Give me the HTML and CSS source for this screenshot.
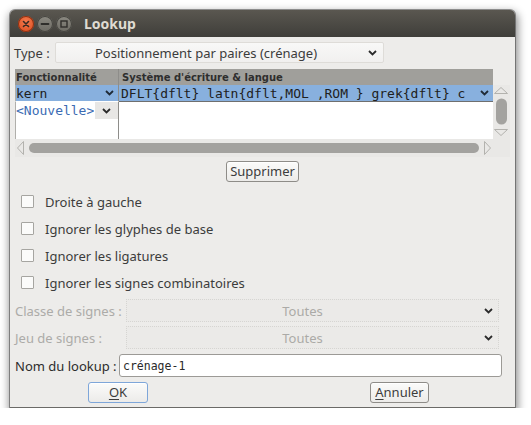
FILE: index.html
```html
<!DOCTYPE html>
<html lang="fr">
<head>
<meta charset="utf-8">
<title>Lookup</title>
<link rel="stylesheet" href="styles.css">
</head>
<body>
<div class="window">
  <div class="titlebar">
    <span class="wbtn close"><svg width="16" height="16" viewBox="0 0 16 16"><path d="M5.5 5.5 L10.5 10.5 M10.5 5.5 L5.5 10.5" stroke="#3a2a22" stroke-width="1.6" stroke-linecap="round"/></svg></span>
    <span class="wbtn"><svg width="16" height="16" viewBox="0 0 16 16"><path d="M4.5 8 H11.5" stroke="#2f2e2b" stroke-width="1.8" stroke-linecap="round"/></svg></span>
    <span class="wbtn"><svg width="16" height="16" viewBox="0 0 16 16"><rect x="5" y="5" width="6" height="6" fill="none" stroke="#2f2e2b" stroke-width="1.4"/></svg></span>
    <span class="title">Lookup</span>
  </div>
  <div class="content">
    <div class="type-row">
      <span class="label">Type :</span>
      <div class="select type-select">
        <span class="sel-text">Positionnement par paires (crénage)</span>
        <svg class="chev" width="9" height="6" viewBox="0 0 9 6"><path d="M1 1 L4.5 4.5 L8 1" fill="none" stroke="#2b2b2b" stroke-width="1.8"/></svg>
      </div>
    </div>

    <div class="table">
      <div class="th th1">Fonctionnalité</div>
      <div class="th th2">Système d'écriture &amp; langue</div>
      <div class="corner-top"></div>

      <div class="cell c1 sel">
        <span class="mono">kern</span>
        <svg class="chev" width="9" height="6" viewBox="0 0 9 6"><path d="M1 1 L4.5 4.5 L8 1" fill="none" stroke="#1f2a36" stroke-width="1.8"/></svg>
      </div>
      <div class="cell c2 sel">
        <span class="mono">DFLT{dflt} latn{dflt,MOL ,ROM } grek{dflt} c</span>
        <svg class="chev" width="9" height="6" viewBox="0 0 9 6"><path d="M1 1 L4.5 4.5 L8 1" fill="none" stroke="#1f2a36" stroke-width="1.8"/></svg>
      </div>
      <div class="vscroll">
        <svg width="16" height="54" viewBox="0 0 16 54">
          <path d="M1.5 8.5 L8 2.5 L14.5 8.5 Z" fill="none" stroke="#b3b2ae" stroke-width="1"/>
          <rect x="3" y="13.5" width="11" height="26" rx="5.5" fill="#a3a29f"/>
          <path d="M1.5 44.5 L8 50.5 L14.5 44.5 Z" fill="none" stroke="#b3b2ae" stroke-width="1"/>
        </svg>
      </div>

      <div class="cell c1 new">
        <span class="mono blue">&lt;Nouvelle&gt;</span>
        <span class="chevbox"><svg class="chev" width="9" height="6" viewBox="0 0 9 6"><path d="M1 1 L4.5 4.5 L8 1" fill="none" stroke="#2b2b2b" stroke-width="1.8"/></svg></span>
      </div>
      <div class="cell c2 empty"></div>

      <div class="hscroll">
        <svg width="495" height="18" viewBox="0 0 495 18">
          <path d="M8.5 2.5 L2.5 9 L8.5 15.5 Z" fill="none" stroke="#b3b2ae" stroke-width="1"/>
          <rect x="14" y="4" width="450" height="10" rx="5" fill="#a3a29f"/>
          <path d="M469.5 2.5 L475.5 9 L469.5 15.5 Z" fill="none" stroke="#b3b2ae" stroke-width="1"/>
        </svg>
      </div>
    </div>

    <div class="center-row">
      <button class="btn">Supprimer</button>
    </div>

    <div class="checks">
      <label class="check"><span class="box"></span><span>Droite à gauche</span></label>
      <label class="check"><span class="box"></span><span>Ignorer les glyphes de base</span></label>
      <label class="check"><span class="box"></span><span>Ignorer les ligatures</span></label>
      <label class="check"><span class="box"></span><span>Ignorer les signes combinatoires</span></label>
    </div>

    <div class="field-row first disabled">
      <span class="flabel">Classe de signes :</span>
      <div class="select dsel">
        <span class="sel-text">Toutes</span>
        <svg class="chev" width="9" height="6" viewBox="0 0 9 6"><path d="M1 1 L4.5 4.5 L8 1" fill="none" stroke="#2b2b2b" stroke-width="1.8"/></svg>
      </div>
    </div>
    <div class="field-row disabled">
      <span class="flabel">Jeu de signes :</span>
      <div class="select dsel">
        <span class="sel-text">Toutes</span>
        <svg class="chev" width="9" height="6" viewBox="0 0 9 6"><path d="M1 1 L4.5 4.5 L8 1" fill="none" stroke="#2b2b2b" stroke-width="1.8"/></svg>
      </div>
    </div>
    <div class="field-row name-row">
      <span class="flabel">Nom du lookup :</span>
      <div class="input"><span class="mono small">crénage-1</span></div>
    </div>

    <div class="button-row">
      <button class="btn ok"><u>O</u>K</button>
      <button class="btn cancel"><u>A</u>nnuler</button>
    </div>
  </div>
</div>
</body>
</html>
```

FILE: styles.css
```css
html, body {
  margin: 0;
  padding: 0;
  background: #ffffff;
}
body {
  padding: 10px 0 0 10px;
  font-family: "Noto Sans", "DejaVu Sans", sans-serif;
  font-size: 13px;
  color: #3c3c3c;
}
.window {
  width: 505px;
  height: 398px;
  max-height: 398px;
  box-sizing: border-box;
  background: #edecea;
  border-radius: 5px 5px 0 0;
  border-bottom: 1px solid #6b6a67;
  box-shadow: 0 0 0 1px rgba(60,60,60,0.5), 1px 4px 8px 2px rgba(0,0,0,0.45);
  display: flex;
  flex-direction: column;
  overflow: hidden;
}
.titlebar {
  height: 27px;
  flex: none;
  background: linear-gradient(#5a5750, #3f3e3a);
  display: flex;
  align-items: center;
  padding-left: 8px;
  gap: 3px;
}
.wbtn {
  width: 16px;
  height: 16px;
  border-radius: 50%;
  background: linear-gradient(#8b8981, #6c6a63);
  box-shadow: inset 0 0 0 1px #45443f;
  display: flex;
}
.wbtn.close {
  background: radial-gradient(circle at 50% 35%, #f47a4e, #d8481a);
  box-shadow: inset 0 0 0 1px #8a3214;
}
.title {
  margin-left: 9px;
  font-weight: bold;
  font-size: 14px;
  color: #dfdbd2;
}
.content {
  flex: 1;
  min-height: 0;
  display: flex;
  flex-direction: column;
  padding: 0 0 0 4px;
}
.type-row {
  margin-top: 5px;
  height: 21px;
  flex: none;
  display: flex;
  align-items: center;
}
.label { width: 41px; flex: none; }
.select {
  display: flex;
  align-items: center;
  box-sizing: border-box;
}
.type-select {
  width: 329px;
  height: 21px;
  background: linear-gradient(#f8f8f7, #f1f0ef);
  border: 1px solid #dedcd8;
  border-radius: 2px;
}
.sel-text {
  flex: 1;
  text-align: center;
  color: #3c3c3c;
}
.type-select .sel-text { padding-right: 12px; }
.chev { flex: none; display: block; }
.type-select .chev { margin-right: 6px; }

/* table */
.table {
  flex: none;
  margin-top: 6px;
  margin-left: 1px;
  width: 495px;
  height: 88px;
  display: grid;
  grid-template-columns: 104px 374px 17px;
  grid-template-rows: 16px 17px 37px 18px;
}
.th {
  background: #a09f9b;
  font-family: "DejaVu Sans", sans-serif;
  font-weight: bold;
  font-size: 10px;
  color: #2e2e2e;
  display: flex;
  align-items: center;
  padding-left: 1px;
  white-space: nowrap;
  overflow: hidden;
}
.th1 { border-right: 1px solid #8e8d8a; }
.th2 { padding-left: 3px; }
.corner-top { background: #edecea; }
.cell {
  display: flex;
  align-items: center;
  overflow: hidden;
  white-space: nowrap;
  background: #ffffff;
}
.c1 { border-right: 1px solid #8e8d8a; border-left: 1px solid #b0afab; }
.c2 { padding-left: 2px; }
.cell.sel { background: #88b0de; }
.c2.sel { border-bottom: 1px solid #6f6f6f; }
.c1.sel { border-bottom: 1px solid #ffffff; }
.mono {
  font-family: "DejaVu Sans Mono", monospace;
  font-size: 13px;
  color: #202020;
  flex: 1;
  overflow: hidden;
}
.mono.blue { color: #3b6bb3; flex: none; }
.mono.small { font-size: 11.5px; color: #2a2a2a; }
.cell.sel .chev { margin-right: 4px; }
.new { align-items: flex-start; }
.new .mono { line-height: 17px; }
.chevbox {
  margin-left: auto;
  width: 23px;
  height: 17px;
  background: #e8e7e5;
  display: flex;
  align-items: center;
  justify-content: center;
}
.vscroll {
  grid-column: 3;
  grid-row: 2 / span 2;
  background: #e9e8e6;
}
.vscroll svg { display: block; }
.hscroll {
  grid-column: 1 / span 3;
  grid-row: 4;
  background: #e9e8e6;
}
.hscroll svg { display: block; }

/* buttons */
.center-row {
  flex: none;
  margin-top: 4px;
  height: 21px;
  display: flex;
  justify-content: center;
  padding-right: 4px;
}
.btn {
  font-family: "Noto Sans", "DejaVu Sans", sans-serif;
  font-size: 13px;
  color: #3c3c3c;
  height: 21px;
  padding: 0 3px;
  border: 1px solid #8e8c88;
  border-radius: 3px;
  background: linear-gradient(#fbfbfa, #ecebe9);
  box-shadow: inset 0 1px 0 #ffffff;
  line-height: 17px;
}
.btn u { text-decoration: underline; text-underline-offset: 2px; }

.checks {
  flex: none;
  margin-top: 6px;
  display: flex;
  flex-direction: column;
}
.check {
  height: 27px;
  display: flex;
  align-items: center;
  padding-left: 7px;
}
.box {
  width: 11px;
  height: 11px;
  border: 1px solid #a6a5a1;
  background: #fbfbfa;
  border-radius: 1px;
  margin-right: 11px;
}

.field-row {
  flex: none;
  height: 23px;
  margin-top: 4px;
  display: flex;
  align-items: center;
}
.field-row.first { margin-top: 3px; }
.flabel { flex: none; white-space: nowrap; padding-left: 1px; }
.disabled .flabel { color: #acaba8; width: 111px; }
.dsel {
  width: 373px;
  height: 23px;
  border: 1px dotted #d6d5d2;
  background: #ebeae8;
}
.dsel .sel-text { color: #abaaa7; padding-right: 6px; }
.dsel .chev { margin-right: 5px; }
.name-row { margin-top: 5px; }
.name-row .flabel { width: 104px; color: #2c2c2c; }
.input {
  width: 383px;
  height: 23px;
  box-sizing: border-box;
  border: 1px solid #9c9a96;
  border-radius: 3px;
  background: #ffffff;
  display: flex;
  align-items: center;
  padding-left: 3px;
}

.button-row {
  flex: none;
  margin-top: 5px;
  height: 21px;
  display: flex;
}
.btn.ok {
  margin-left: 74px;
  width: 60px;
  border-color: #7ea6d9;
}
.btn.cancel {
  margin-left: 222px;
  width: 59px;
}
```
